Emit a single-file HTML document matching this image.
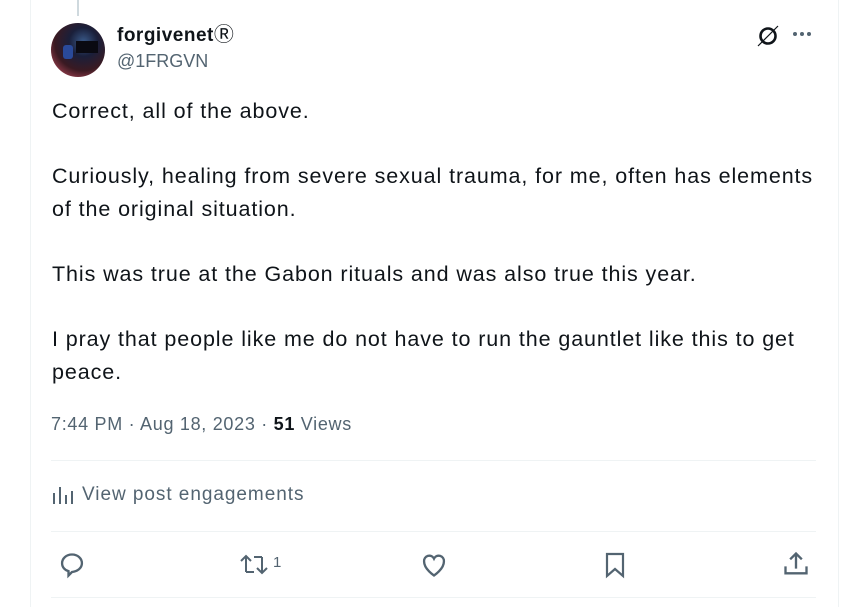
<!DOCTYPE html>
<html><head><style>
body{margin:0;width:841px;height:607px;background:#fff;font-family:"Liberation Sans",sans-serif;position:relative;overflow:hidden;color:#0f1419}
.a{position:absolute}
.border{left:30px;top:0;width:807px;height:607px;border-left:1px solid #eff3f4;border-right:1px solid #eff3f4}
.body{left:52px;top:95px;width:775px;font-size:21.5px;letter-spacing:0.9px;line-height:33px}
.body p{margin:0 0 32px 0}
.hr{left:51px;width:765px;height:1px;background:#eff3f4}
.g{color:#536471}
</style></head><body>
<div class="a border"></div>
<div class="a" style="left:77px;top:0;width:2px;height:16px;background:#cfd9de"></div>
<div class="a" style="left:51px;top:23px;width:54px;height:54px;border-radius:50%;overflow:hidden;background:radial-gradient(circle at 60% 35%,#3a5a8a 0,#1a1f3a 30%,#3a1a22 60%,#a04050 85%,#c06070 100%)">
<div class="a" style="left:12px;top:22px;width:10px;height:14px;background:#2a4a9a;border-radius:3px"></div>
<div class="a" style="left:25px;top:18px;width:22px;height:12px;background:#0a0a12"></div>
</div>
<div class="a" style="left:117px;top:24px;font-size:19px;line-height:24px;font-weight:bold;letter-spacing:0.5px">forgivenet<span style="font-family:'DejaVu Sans',sans-serif;font-weight:normal;font-size:20px;line-height:20px">Ⓡ</span></div>
<div class="a g" style="left:117px;top:51px;font-size:18px">@1FRGVN</div>
<svg class="a" style="left:755px;top:24px" width="26" height="24" viewBox="0 0 26 24"><circle cx="13" cy="12" r="7.5" fill="none" stroke="#0f1419" stroke-width="2.6"/><line x1="3" y1="22" x2="23" y2="2" stroke="#0f1419" stroke-width="1.2"/></svg>
<div class="a" style="left:793px;top:32px;display:flex;gap:3px"><i style="width:4px;height:4px;border-radius:50%;background:#536471"></i><i style="width:4px;height:4px;border-radius:50%;background:#536471"></i><i style="width:4px;height:4px;border-radius:50%;background:#536471"></i></div>
<div class="a body">
<p>Correct, all of the above.</p>
<p>Curiously, healing from severe sexual trauma, for me, often has elements of the original situation.</p>
<p>This was true at the Gabon rituals and was also true this year.</p>
<p>I pray that people like me do not have to run the gauntlet like this to get peace.</p>
</div>
<div class="a g" style="left:51px;top:414px;font-size:18px;letter-spacing:0.7px">7:44 PM · Aug 18, 2023 · <b style="color:#0f1419">51</b> Views</div>
<div class="a hr" style="top:460px"></div>
<svg class="a" style="left:52px;top:485px" width="22" height="20" viewBox="0 0 22 20"><g stroke="#536471" stroke-width="2"><line x1="2" y1="8" x2="2" y2="19"/><line x1="8" y1="2" x2="8" y2="19"/><line x1="14" y1="10" x2="14" y2="19"/><line x1="20" y1="6" x2="20" y2="19"/></g></svg>
<div class="a g" style="left:82px;top:484px;font-size:19px;letter-spacing:0.95px">View post engagements</div>
<div class="a hr" style="top:531px"></div>
<svg class="a" style="left:58px;top:551px" width="28" height="28" viewBox="0 0 24 24" fill="none" stroke="#536471" stroke-width="2"><path d="M12 3C7 3 3.5 6.5 3.5 10.5c0 3.5 2.5 6 5.5 6.8V21l3-3c4.6-.5 8.5-3.3 8.5-7.5C20.5 6.5 17 3 12 3z"/></svg>
<svg class="a" style="left:239px;top:552px" width="30" height="26" viewBox="0 0 30 26" fill="none" stroke="#536471" stroke-width="2"><path d="M7 20V5M2 9l5-5 5 5M7 20h8"/><path d="M23 5v15M18 16l5 5 5-5M23 5h-8"/></svg>
<div class="a g" style="left:273px;top:554px;font-size:15px">1</div>
<svg class="a" style="left:420px;top:551px" width="28" height="28" viewBox="0 0 24 24" fill="none" stroke="#536471" stroke-width="2"><path d="M12 21s-8.5-5.5-8.5-12A4.5 4.5 0 0 1 12 6.5 4.5 4.5 0 0 1 20.5 9c0 6.5-8.5 12-8.5 12z"/></svg>
<svg class="a" style="left:603px;top:551px" width="24" height="28" viewBox="0 0 24 28" fill="none" stroke="#536471" stroke-width="2.2"><path d="M4 3h16v22l-8-7-8 7z"/></svg>
<svg class="a" style="left:782px;top:550px" width="28" height="28" viewBox="0 0 24 24" fill="none" stroke="#536471" stroke-width="2"><path d="M12 3v13M7 8l5-5 5 5M3 14v6h18v-6"/></svg>
<div class="a hr" style="top:597px"></div>
</body></html>
